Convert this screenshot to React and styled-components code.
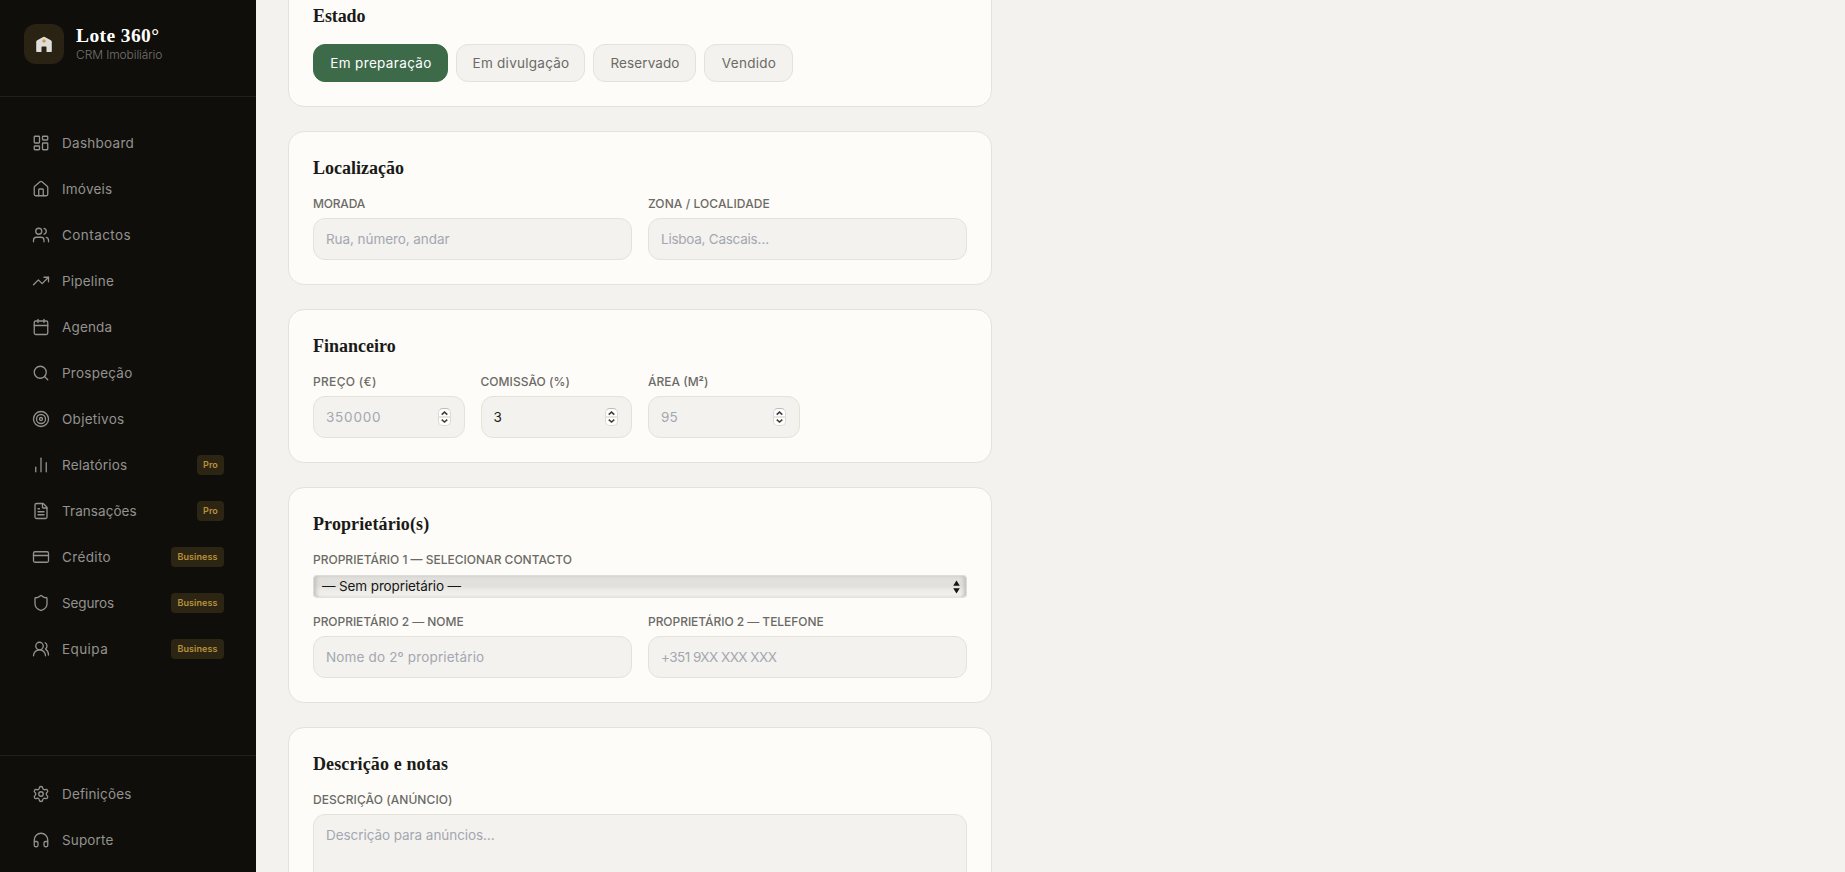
import React from 'react';
import styled, { createGlobalStyle, css } from 'styled-components';
import {
  LayoutDashboard, House, Users, TrendingUp, Calendar, Search, Target,
  ChartNoAxesColumn, FileText, CreditCard, Shield, UsersRound, Settings, Headphones,
} from 'lucide-react';

const sans = `Inter, "Liberation Sans", sans-serif`;
const serif = `"Liberation Serif", serif`;

const GlobalStyle = createGlobalStyle`
  *, *::before, *::after { box-sizing: border-box; }
  html, body, #root { height: 100%; }
  body { margin: 0; background: #f3f2ee; font-family: ${sans}; overflow: hidden; }
`;

const Shell = styled.div`
  display: flex;
  height: 100vh;
  overflow: hidden;
`;

/* Sidebar */
const Sidebar = styled.aside`
  display: flex;
  flex-direction: column;
  flex: none;
  width: 256px;
  height: 100%;
  background: #0f0e0a;
  overflow: hidden;
`;

const Brand = styled.header`
  display: flex;
  align-items: flex-start;
  gap: 12px;
  height: 97px;
  flex: none;
  padding: 24px;
  border-bottom: 1px solid #201f1b;
`;

const BrandMark = styled.div`
  display: grid;
  place-items: center;
  width: 40px;
  height: 40px;
  border-radius: 12px;
  background: #2a2212;
`;

const BrandText = styled.div`
  display: flex;
  flex-direction: column;
`;

const BrandName = styled.span`
  margin-top: 1px;
  font: 700 19.5px/22px ${serif};
  letter-spacing: 0.4px;
  color: #ffffff;
`;

const BrandTagline = styled.span`
  font-size: 12px;
  line-height: 16px;
  font-weight: 300;
  letter-spacing: -0.1px;
  color: #74736f;
`;

const Nav = styled.nav`
  display: flex;
  flex-direction: column;
  gap: 2px;
  flex: 1;
  padding: 24px 16px;
`;

const FooterNav = styled.nav`
  display: flex;
  flex-direction: column;
  gap: 2px;
  flex: none;
  height: 117px;
  padding: 16px 16px 0;
  border-top: 1px solid #201f1b;
`;

const NavItem = styled.a`
  display: flex;
  align-items: center;
  gap: 12px;
  flex: none;
  height: 44px;
  padding: 0 16px;
  color: #93928f;
  font-size: 13.5px;
  line-height: 20px;

  svg { flex: none; }
`;

const NavLabel = styled.span`
  flex: 1;
  letter-spacing: ${(p) => p.$track}px;
`;

const PlanBadge = styled.span`
  display: flex;
  align-items: center;
  justify-content: center;
  width: ${(p) => (p.$wide ? 53 : 27)}px;
  height: 20px;
  border-radius: 4px;
  background: #2d2513;
  color: #b8933a;
  font-size: 9px;
  font-weight: 600;
  letter-spacing: 0.05px;
`;

/* Content */
const Main = styled.main`
  flex: 1;
  min-width: 0;
  padding: 0 32px;
  overflow: hidden;
`;

const Form = styled.form`
  display: flex;
  flex-direction: column;
  gap: 24px;
  width: 704px;
  margin-top: -21px;
`;

const Card = styled.section`
  display: flex;
  flex-direction: column;
  gap: 16px;
  padding: 24px;
  border: 1px solid #e5e3d8;
  border-radius: 16px;
  background: #fdfcf8;
`;

const CardTitle = styled.h2`
  margin: 0;
  font: 700 18px/24px ${serif};
  letter-spacing: ${(p) => p.$track || 0}px;
  color: #1a1a18;
`;

const StateRow = styled.div`
  display: flex;
  gap: 8px;
`;

const StateButton = styled.button`
  width: ${(p) => p.$width}px;
  height: 38px;
  padding: 0 0 0 1px;
  border: 1px solid ${(p) => (p.$active ? '#3d6b4a' : '#e5e3d8')};
  border-radius: 12px;
  background: ${(p) => (p.$active ? '#3d6b4a' : '#f3f2ee')};
  color: ${(p) => (p.$active ? '#ffffff' : '#6b6a66')};
  font: 400 13.5px/20px ${sans};
  letter-spacing: ${(p) => p.$track}px;
`;

const Grid = styled.div`
  display: grid;
  grid-template-columns: repeat(${(p) => p.$cols}, minmax(0, 1fr));
  gap: 16px;
`;

const FieldBox = styled.label`
  display: flex;
  flex-direction: column;
  gap: 6px;
`;

const FieldLabel = styled.span`
  font-size: 12px;
  line-height: 16px;
  font-weight: 500;
  white-space: nowrap;
  letter-spacing: ${(p) => p.$track || 0}px;
  color: #6b6a66;
`;

const control = css`
  width: 100%;
  border: 1px solid #e5e3d8;
  border-radius: 12px;
  background: #f3f2ee;
  color: #1a1a18;
  font: 400 13.5px/20px ${sans};
  letter-spacing: ${(p) => p.$track || 0}px;
  outline: none;

  &::placeholder { color: #a3a7b1; opacity: 1; }
`;

const TextInput = styled.input`
  ${control}
  height: 42px;
  padding: 0 12px;
`;

const TextArea = styled.textarea`
  ${control}
  display: block;
  height: 96px;
  padding: 10px 12px;
  resize: none;
`;

const NumberShell = styled.span`
  ${control}
  display: flex;
  align-items: center;
  height: 42px;
  padding: 0 13px 0 12px;
`;

const NumberInput = styled.input`
  flex: 1;
  min-width: 0;
  padding: 0;
  border: 0;
  background: none;
  color: inherit;
  font: inherit;
  letter-spacing: inherit;
  outline: none;

  &::placeholder { color: #a3a7b1; opacity: 1; }
`;

const Stepper = styled.span`
  display: flex;
  flex: none;
  width: 13px;
  height: 18px;
  border: 1px solid #dbdad6;
  border-top-color: #bdbcb8;
  border-radius: 5px;
  background: #ffffff;

  svg { display: block; }
`;

const SelectBox = styled.span`
  display: flex;
  align-items: center;
  justify-content: space-between;
  height: 23px;
  margin-top: 1px;
  padding: 0 6px 0 8px;
  border: 1px solid #dddcd8;
  border-bottom-color: #e3e2dc;
  border-radius: 4px;
  background: linear-gradient(#e1e0dc 0%, #e1e0dc 48%, #ebeae6 64%, #f5f4f1 100%);
  box-shadow: inset 4px 0 4px -2px #bfbeba, inset -4px 0 4px -2px #bfbeba;
  color: #161615;
`;

const SelectValue = styled.span`
  padding-bottom: 2px;
  font-size: 13.5px;
  line-height: 18px;
  letter-spacing: -0.12px;
`;

const mainNav = [
  { icon: LayoutDashboard, label: 'Dashboard', track: 0.28 },
  { icon: House, label: 'Imóveis', track: 0.21 },
  { icon: Users, label: 'Contactos', track: 0.43 },
  { icon: TrendingUp, label: 'Pipeline', track: 0.21 },
  { icon: Calendar, label: 'Agenda', track: 0.16 },
  { icon: Search, label: 'Prospeção', track: 0.24 },
  { icon: Target, label: 'Objetivos', track: 0.27 },
  { icon: ChartNoAxesColumn, label: 'Relatórios', track: 0.19, plan: 'Pro' },
  { icon: FileText, label: 'Transações', track: 0.06, plan: 'Pro' },
  { icon: CreditCard, label: 'Crédito', track: 0.35, plan: 'Business' },
  { icon: Shield, label: 'Seguros', track: -0.12, plan: 'Business' },
  { icon: UsersRound, label: 'Equipa', track: 0.42, plan: 'Business' },
];

const footerNav = [
  { icon: Settings, label: 'Definições', track: 0.15 },
  { icon: Headphones, label: 'Suporte', track: 0.15 },
];

const states = [
  { label: 'Em preparação', width: 135, track: 0.35, active: true },
  { label: 'Em divulgação', width: 129, track: 0.26 },
  { label: 'Reservado', width: 103, track: 0.12 },
  { label: 'Vendido', width: 89, track: 0.29 },
];

function NavEntry({ icon: Icon, label, track, plan }) {
  return (
    <NavItem>
      <Icon size={18} strokeWidth={1.75} />
      <NavLabel $track={track}>{label}</NavLabel>
      {plan && <PlanBadge $wide={plan === 'Business'}>{plan}</PlanBadge>}
    </NavItem>
  );
}

function Field({ label, labelTrack, children }) {
  return (
    <FieldBox>
      <FieldLabel $track={labelTrack}>{label}</FieldLabel>
      {children}
    </FieldBox>
  );
}

function NumberField({ placeholder, value, track }) {
  return (
    <NumberShell $track={track}>
      <NumberInput placeholder={placeholder} defaultValue={value} />
      <Stepper>
        <svg width="11" height="16" viewBox="0 0 11 16" fill="none" stroke="#3c3c3a" strokeWidth="1.5">
          <path d="M0 8h11" stroke="#dddcd8" />
          <path d="M2.7 5.6 5.5 3.1l2.8 2.5M2.7 10.6l2.8 2.5 2.8-2.5" />
        </svg>
      </Stepper>
    </NumberShell>
  );
}

export default function App() {
  return (
    <Shell>
      <GlobalStyle />
      <Sidebar>
        <Brand>
          <BrandMark>
            <svg width="18" height="18" viewBox="0 0 18 18">
              <path
                d="M8.2 1.9Q9 1.4 9.8 1.9L15.8 5.2Q16.8 5.8 16.8 6.8V16.2Q16.8 17 16 17H11.5V12.1Q11.5 11.4 10.8 11.4H7.2Q6.5 11.4 6.5 12.1V17H2Q1.2 17 1.2 16.2V6.8Q1.2 5.8 2.2 5.2Z"
                fill="#dfdeda"
              />
              <circle cx="9" cy="6" r="1.8" fill="#c9a040" />
            </svg>
          </BrandMark>
          <BrandText>
            <BrandName>Lote 360°</BrandName>
            <BrandTagline>CRM Imobiliário</BrandTagline>
          </BrandText>
        </Brand>
        <Nav>{mainNav.map((item) => <NavEntry key={item.label} {...item} />)}</Nav>
        <FooterNav>{footerNav.map((item) => <NavEntry key={item.label} {...item} />)}</FooterNav>
      </Sidebar>

      <Main>
        <Form>
          <Card>
            <CardTitle $track={-0.1}>Estado</CardTitle>
            <StateRow>
              {states.map((s) => (
                <StateButton key={s.label} type="button" $active={s.active} $width={s.width} $track={s.track}>
                  {s.label}
                </StateButton>
              ))}
            </StateRow>
          </Card>

          <Card>
            <CardTitle>Localização</CardTitle>
            <Grid $cols={2}>
              <Field label="MORADA" labelTrack={-0.2}>
                <TextInput placeholder="Rua, número, andar" $track={-0.07} />
              </Field>
              <Field label="ZONA / LOCALIDADE" labelTrack={0.09}>
                <TextInput placeholder="Lisboa, Cascais…" $track={-0.25} />
              </Field>
            </Grid>
          </Card>

          <Card>
            <CardTitle>Financeiro</CardTitle>
            <Grid $cols={4}>
              <Field label="PREÇO (€)" labelTrack={0.32}>
                <NumberField placeholder="350000" track={0.78} />
              </Field>
              <Field label="COMISSÃO (%)" labelTrack={0.05}>
                <NumberField value="3" />
              </Field>
              <Field label="ÁREA (M²)">
                <NumberField placeholder="95" track={0.13} />
              </Field>
            </Grid>
          </Card>

          <Card>
            <CardTitle $track={0.11}>Proprietário(s)</CardTitle>
            <Field label="PROPRIETÁRIO 1 — SELECIONAR CONTACTO">
              <SelectBox>
                <SelectValue>— Sem proprietário —</SelectValue>
                <svg width="7" height="14" viewBox="0 0 7 14" fill="#161615">
                  <path d="M3.5 0.5 6.8 5.8H0.2zM3.5 13.5 6.8 8.2H0.2z" />
                </svg>
              </SelectBox>
            </Field>
            <Grid $cols={2}>
              <Field label="PROPRIETÁRIO 2 — NOME" labelTrack={-0.05}>
                <TextInput placeholder="Nome do 2º proprietário" $track={0.16} />
              </Field>
              <Field label="PROPRIETÁRIO 2 — TELEFONE" labelTrack={-0.05}>
                <TextInput placeholder="+351 9XX XXX XXX" $track={-0.53} />
              </Field>
            </Grid>
          </Card>

          <Card>
            <CardTitle $track={0.12}>Descrição e notas</CardTitle>
            <Field label="DESCRIÇÃO (ANÚNCIO)" labelTrack={0.07}>
              <TextArea placeholder="Descrição para anúncios…" $track={-0.06} />
            </Field>
          </Card>
        </Form>
      </Main>
    </Shell>
  );
}
